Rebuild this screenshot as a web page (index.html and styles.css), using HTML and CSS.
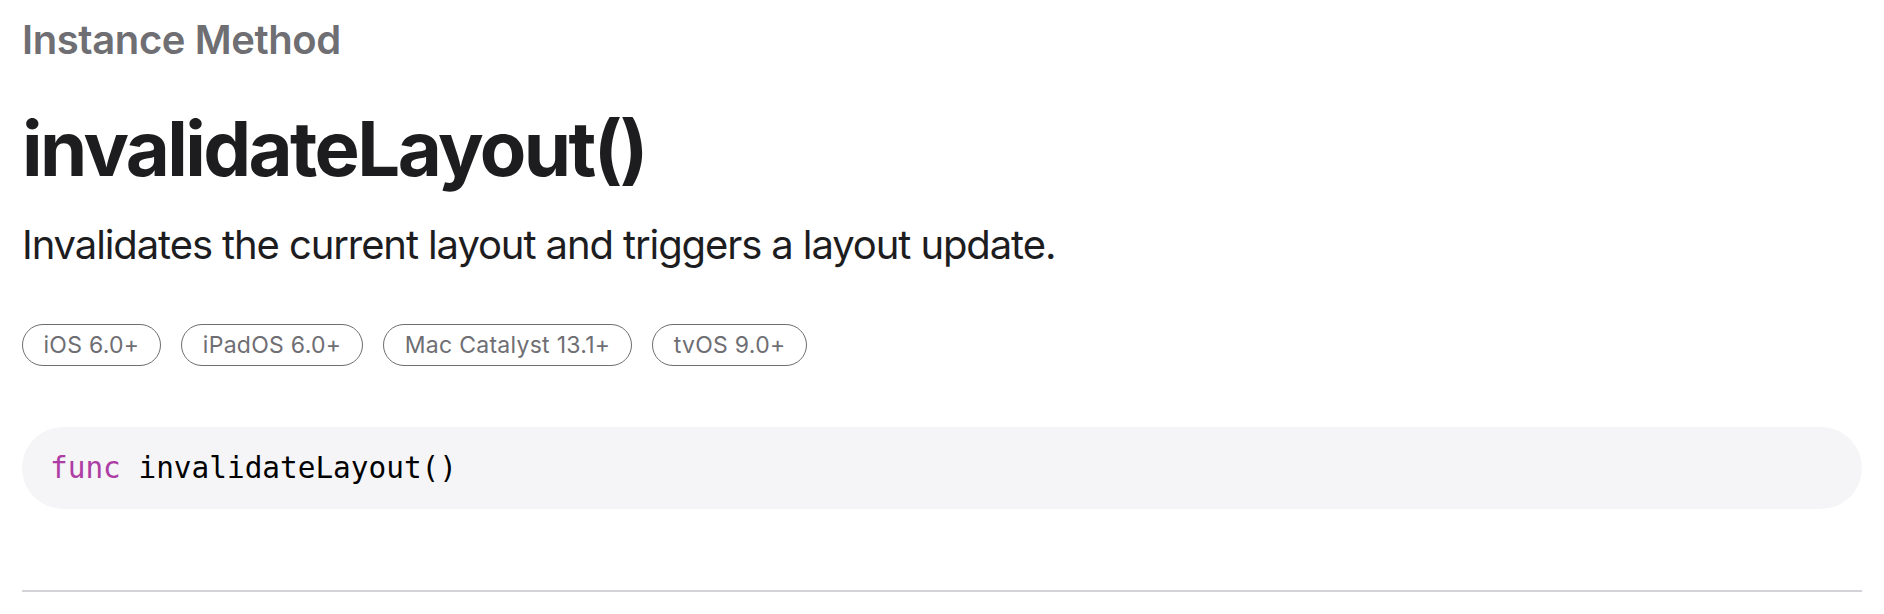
FILE: index.html
```html
<!DOCTYPE html>
<html lang="en">
<head>
<meta charset="utf-8">
<title>invalidateLayout()</title>
<link rel="stylesheet" href="styles.css">
</head>
<body>
<main class="doc">
  <div class="eyebrow">Instance Method</div>
  <h1 class="title">invalidateLayout()</h1>
  <p class="abstract">Invalidates the current layout and triggers a layout update.</p>
  <ul class="badges">
    <li class="badge">iOS 6.0+</li>
    <li class="badge">iPadOS 6.0+</li>
    <li class="badge">Mac Catalyst 13.1+</li>
    <li class="badge">tvOS 9.0+</li>
  </ul>
  <pre class="declaration"><code><span class="kw">func</span> invalidateLayout()</code></pre>
  <hr class="divider">
</main>
</body>
</html>
```

FILE: styles.css
```css
html, body {
  margin: 0;
  padding: 0;
  background: #ffffff;
}

.doc {
  display: flex;
  flex-direction: column;
  align-items: stretch;
  padding: 20px 22px 0 22px;
  font-family: Inter, "Noto Sans", sans-serif;
  color: #1d1d1f;
}

.eyebrow {
  font-size: 40px;
  line-height: 40px;
  font-weight: 600;
  color: #6e6e73;
  letter-spacing: -0.01em;
}

.title {
  margin: 50px 0 0 0;
  font-size: 76px;
  line-height: 76px;
  font-weight: 700;
  letter-spacing: -0.034em;
  color: #1d1d1f;
}

.abstract {
  margin: 39px 0 0 0;
  font-size: 40px;
  line-height: 40px;
  font-weight: 400;
  letter-spacing: -0.0275em;
  color: #1d1d1f;
}

.badges {
  list-style: none;
  display: flex;
  gap: 20.5px;
  margin: 59px 0 0 0;
  padding: 0;
}

.badge {
  box-sizing: border-box;
  height: 42px;
  display: flex;
  align-items: center;
  padding: 0 20.5px;
  border: 1.5px solid #6e6e73;
  border-radius: 21px;
  font-size: 23px;
  letter-spacing: 0.012em;
  color: #6e6e73;
}

.declaration {
  box-sizing: border-box;
  margin: 61px 0 0 0;
  height: 82px;
  display: flex;
  align-items: center;
  padding: 0 28px;
  background: #f5f5f7;
  border-radius: 41px;
  font-family: "DejaVu Sans Mono", "Liberation Mono", monospace;
  font-size: 29.4px;
  color: #000000;
}

.kw {
  color: #ad3da4;
}

.divider {
  margin: 81px 0 0 0;
  border: none;
  height: 2px;
  background: #d2d2d7;
}
```
